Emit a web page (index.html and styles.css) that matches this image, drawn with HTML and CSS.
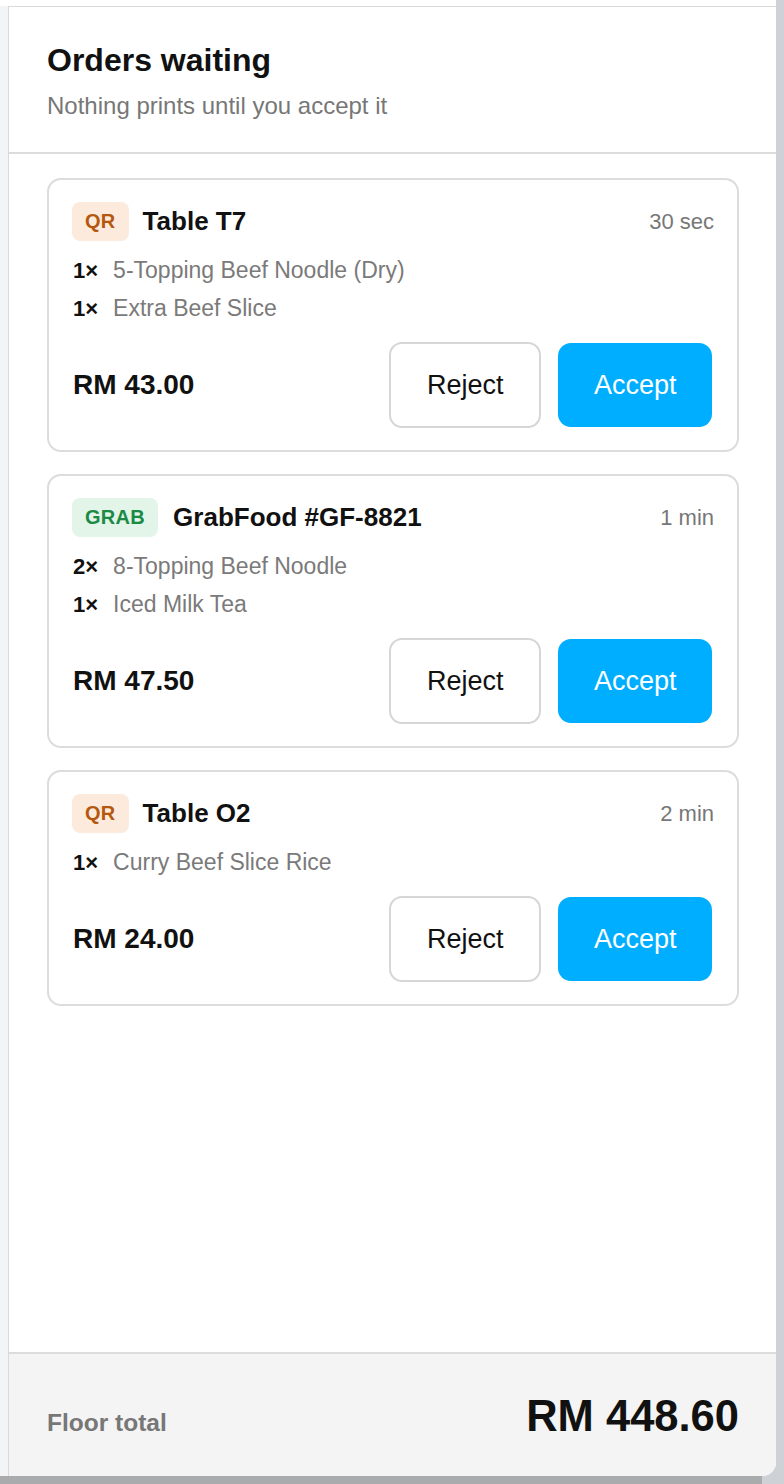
FILE: index.html
```html
<!DOCTYPE html>
<html lang="en">
<head>
  <meta charset="UTF-8">
  <meta name="viewport" content="width=device-width, initial-scale=1.0">
  <title>Orders waiting</title>
  <link rel="stylesheet" href="styles.css">
</head>
<body>
<div class="device">
  <div class="panel">
    <div class="panel-head">
      <h1>Orders waiting</h1>
      <p class="sub">Nothing prints until you accept it</p>
    </div>

    <div class="orders">
      <div class="order">
        <div class="order-head">
          <span class="badge badge-qr">QR</span>
          <span class="order-name">Table T7</span>
          <span class="order-time">30 sec</span>
        </div>
        <ul class="items">
          <li><b>1×</b>5-Topping Beef Noodle (Dry)</li>
          <li><b>1×</b>Extra Beef Slice</li>
        </ul>
        <div class="order-foot">
          <span class="price">RM 43.00</span>
          <div class="actions">
            <button class="btn btn-reject">Reject</button>
            <button class="btn btn-accept">Accept</button>
          </div>
        </div>
      </div>

      <div class="order">
        <div class="order-head">
          <span class="badge badge-grab">GRAB</span>
          <span class="order-name">GrabFood #GF-8821</span>
          <span class="order-time">1 min</span>
        </div>
        <ul class="items">
          <li><b>2×</b>8-Topping Beef Noodle</li>
          <li><b>1×</b>Iced Milk Tea</li>
        </ul>
        <div class="order-foot">
          <span class="price">RM 47.50</span>
          <div class="actions">
            <button class="btn btn-reject">Reject</button>
            <button class="btn btn-accept">Accept</button>
          </div>
        </div>
      </div>

      <div class="order">
        <div class="order-head">
          <span class="badge badge-qr">QR</span>
          <span class="order-name">Table O2</span>
          <span class="order-time">2 min</span>
        </div>
        <ul class="items">
          <li><b>1×</b>Curry Beef Slice Rice</li>
        </ul>
        <div class="order-foot">
          <span class="price">RM 24.00</span>
          <div class="actions">
            <button class="btn btn-reject">Reject</button>
            <button class="btn btn-accept">Accept</button>
          </div>
        </div>
      </div>
    </div>

    <div class="panel-foot">
      <span class="foot-label">Floor total</span>
      <span class="foot-total">RM 448.60</span>
    </div>
  </div>
</div>
<div class="shelf"></div>
</body>
</html>
```

FILE: styles.css
```css
* {
  box-sizing: border-box;
}
body {
  margin: 0;
  font-family: "Liberation Sans", Arial, sans-serif;
  background-color: #ced2d7;
  color: #111;
}
.device {
  width: 776px;
  height: 1476px;
  display: flex;
  background: linear-gradient(#fff 6px, #f3f4f6 6px);
  border-bottom-right-radius: 14px;
  padding: 6px 0 0 8px;
}
.shelf {
  width: 762px;
  height: 8px;
  background-color: #a9abad;
}
.panel {
  flex: 1;
  display: flex;
  flex-direction: column;
  background-color: #fff;
  border-top: 1px solid #d9d9d9;
  border-left: 1px solid #d9d9d9;
  border-bottom-right-radius: 14px;
  overflow: hidden;
}
.panel-head {
  padding: 34px 37px 32px 38px;
  border-bottom: 2px solid #dcdcdc;
}
.panel-head h1 {
  margin: 0;
  font-size: 32px;
  line-height: 38px;
  font-weight: bold;
}
.sub {
  margin: 13px 0 0;
  font-size: 24px;
  line-height: 28px;
  color: #777;
}
.orders {
  flex: 1;
  padding: 24px 37px 0 38px;
  display: flex;
  flex-direction: column;
  gap: 22px;
}
.order {
  border: 2px solid #dcdcdc;
  border-radius: 14px;
  padding: 22px 23px 22px 23px;
}
.order-head {
  display: flex;
  align-items: center;
  gap: 14px;
  height: 39px;
}
.badge {
  height: 39px;
  line-height: 39px;
  padding: 0 13px;
  border-radius: 8px;
  font-size: 20px;
  font-weight: bold;
  letter-spacing: 0.3px;
}
.badge-qr {
  background-color: #fcebdc;
  color: #b5580f;
}
.badge-grab {
  background-color: #e2f5e8;
  color: #1b8a44;
}
.order-name {
  font-size: 26px;
  font-weight: bold;
}
.badge-grab + .order-name {
  margin-left: 1px;
}
.order-time {
  margin-left: auto;
  font-size: 22px;
  color: #777;
}
.items {
  list-style: none;
  margin: 10px 0 0;
  padding: 0;
  font-size: 23px;
  line-height: 38px;
  color: #7a7a7a;
}
.items li {
  height: 38px;
}
.items b {
  display: inline-block;
  line-height: 1;
  color: #111;
  margin-left: 1px;
  margin-right: 15px;
  font-size: 22px;
}
.order-foot {
  display: flex;
  align-items: center;
  justify-content: space-between;
  margin-top: 15px;
}
.price {
  margin-left: 1px;
  font-size: 28px;
  font-weight: bold;
}
.actions {
  display: flex;
  align-items: center;
  gap: 17px;
  margin-right: 2px;
}
.btn {
  font-family: "Liberation Sans", Arial, sans-serif;
  font-size: 27px;
  border-radius: 13px;
  cursor: pointer;
}
.btn-reject {
  height: 86px;
  padding: 0 36px;
  background-color: #fff;
  color: #111;
  border: 2px solid #d6d6d6;
}
.btn-accept {
  height: 84px;
  padding: 0 35.5px;
  background-color: #00aeff;
  color: #fff;
  border: none;
}
.panel-foot {
  display: flex;
  align-items: baseline;
  justify-content: space-between;
  padding: 36px 37px 34px 38px;
  background-color: #f4f4f4;
  border-top: 2px solid #dcdcdc;
}
.foot-label {
  font-size: 24.5px;
  font-weight: bold;
  color: #777;
}
.foot-total {
  font-size: 43.5px;
  line-height: 52px;
  font-weight: bold;
}
```
